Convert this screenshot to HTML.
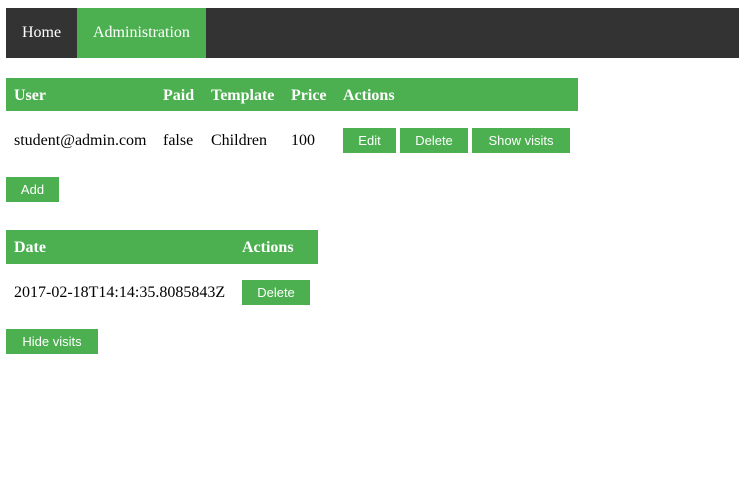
<!DOCTYPE html>
<html><head><style>
body{margin:0;background:#fff;width:739px;height:484px;position:relative;font-family:"Liberation Serif",serif;font-size:16px;color:#000;overflow:hidden}
.a{position:absolute}
.g{background:#4caf50}
.t{position:absolute;white-space:nowrap;line-height:18px}
.w{color:#fff}
.b{font-weight:bold}
.btn{position:absolute;background:#4caf50;color:#fff;font-family:"Liberation Sans",sans-serif;font-size:13px;text-align:center;height:25px;line-height:25px}
</style></head><body>
<div class="a" style="left:6px;top:8px;width:733px;height:50px;background:#333"></div>
<div class="a g" style="left:77px;top:8px;width:129px;height:50px"></div>
<div class="t w" style="left:22px;top:24px">Home</div>
<div class="t w" style="left:93px;top:24px">Administration</div>

<div class="a g" style="left:6px;top:78px;width:572px;height:33px"></div>
<div class="t w b" style="left:14px;top:87px">User</div>
<div class="t w b" style="left:163px;top:87px">Paid</div>
<div class="t w b" style="left:211px;top:87px">Template</div>
<div class="t w b" style="left:291px;top:87px">Price</div>
<div class="t w b" style="left:343px;top:87px">Actions</div>
<div class="t" style="left:14px;top:132px">student@admin.com</div>
<div class="t" style="left:163px;top:132px">false</div>
<div class="t" style="left:211px;top:132px">Children</div>
<div class="t" style="left:291px;top:132px">100</div>
<div class="btn" style="left:343px;top:128px;width:53px">Edit</div>
<div class="btn" style="left:400px;top:128px;width:68px">Delete</div>
<div class="btn" style="left:472px;top:128px;width:98px">Show visits</div>
<div class="btn" style="left:6px;top:177px;width:53px">Add</div>

<div class="a g" style="left:6px;top:230px;width:312px;height:34px"></div>
<div class="t w b" style="left:14px;top:239px">Date</div>
<div class="t w b" style="left:242px;top:239px">Actions</div>
<div class="t" style="left:14px;top:284px">2017-02-18T14:14:35.8085843Z</div>
<div class="btn" style="left:242px;top:280px;width:68px">Delete</div>
<div class="btn" style="left:6px;top:329px;width:92px">Hide visits</div>
</body></html>
